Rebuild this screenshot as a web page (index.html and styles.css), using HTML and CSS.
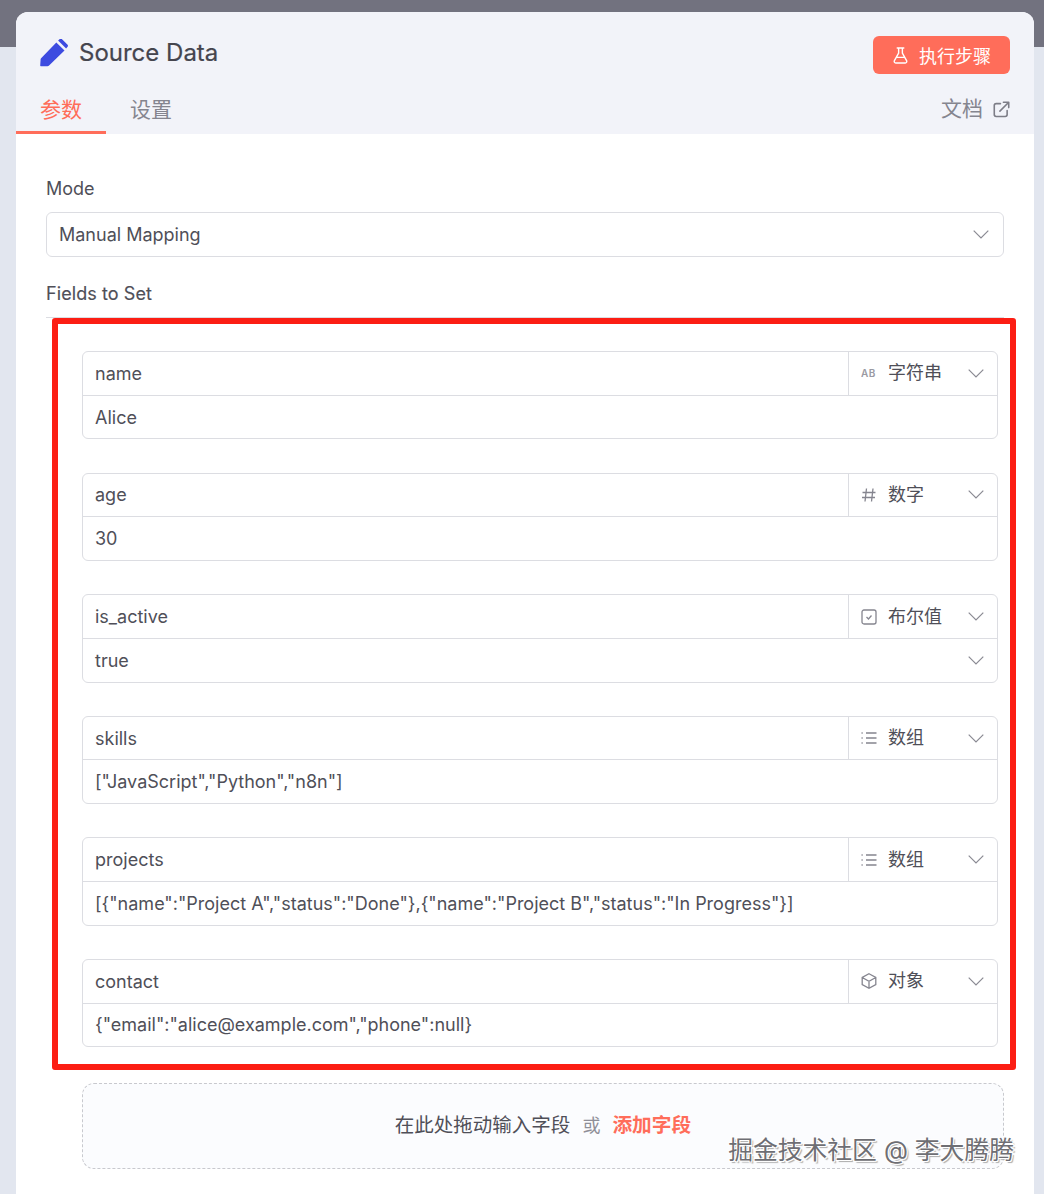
FILE: index.html
```html
<!DOCTYPE html>
<html lang="zh">
<head>
<meta charset="utf-8">
<title>Source Data</title>
<link rel="stylesheet" href="styles.css">
</head>
<body>
<div class="backdrop"></div>
<main class="card">
  <header class="head">
    <div class="title-row">
      <h1 class="title">
        <svg class="pencil" viewBox="0 0 28 28" width="28" height="28"><path fill="#3d4be0" d="M1 27.5c-.3 0-.6-.3-.6-.7l.4-6.2c0-.5.2-.9.5-1.2L16.500 3.600l8.200 8.200L9 27c-.4.3-.8.5-1.300.5zM18.300 1.800 20 .3c.6-.5 1.400-.5 2 0l5.800 5.700c.5.600.5 1.400 0 2l-1.500 1.600z" transform="translate(-.2 -.2)"/></svg>
        Source Data
      </h1>
      <button class="run">
        <svg viewBox="0 0 16 18" width="15" height="17" fill="none" stroke="#fff" stroke-width="1.500" stroke-linejoin="round" stroke-linecap="round"><path d="M4.500 1h7M6 1v5.500L1.500 14.500c-.6 1.100.1 2.500 1.400 2.500h10.200c1.300 0 2-1.400 1.400-2.500L10 6.500V1M4 11h8"/></svg>
        <span>执行步骤</span>
      </button>
    </div>
    <nav class="tabs">
      <a class="tab active">参数</a>
      <a class="tab">设置</a>
      <a class="docs">文档
        <svg viewBox="0 0 16 16" width="17" height="17" fill="none" stroke="#7d7d87" stroke-width="1.500" stroke-linecap="round" stroke-linejoin="round"><path d="M7 2.500H3A1.800 1.800 0 0 0 1.200 4.300v8.500A1.800 1.800 0 0 0 3 14.600h8.500a1.800 1.800 0 0 0 1.800-1.800V9M6.500 9.500 14.800 1.200M9.800 1.200h5v5"/></svg>
      </a>
    </nav>
  </header>
  <section class="body">
    <label class="label mode-label">Mode</label>
    <div class="select-box"><span>Manual Mapping</span><svg class="chev" viewBox="0 0 16 9"><path d="M.7.7 8 8l7.300-7.300"/></svg></div>
    <label class="label fields-label">Fields to Set</label>
    <div class="rule"></div>
    <div class="fields">
      <div class="field">
        <div class="row">
          <div class="name">name</div>
          <div class="type">
            <svg class="ti" viewBox="0 0 16 16"><text x="0" y="11.500" class="ab">AB</text></svg>
            <span>字符串</span><svg class="chev" viewBox="0 0 16 9"><path d="M.7.7 8 8l7.300-7.300"/></svg>
          </div>
        </div>
        <div class="row val">Alice</div>
      </div>
      <div class="field">
        <div class="row">
          <div class="name">age</div>
          <div class="type">
            <svg class="ti" viewBox="0 0 16 16"><path d="M5.500 1.500 4 14.500M12 1.500l-1.500 13M1.500 5.500h13M1 10.500h13"/></svg>
            <span>数字</span><svg class="chev" viewBox="0 0 16 9"><path d="M.7.7 8 8l7.300-7.300"/></svg>
          </div>
        </div>
        <div class="row val">30</div>
      </div>
      <div class="field">
        <div class="row">
          <div class="name">is_active</div>
          <div class="type">
            <svg class="ti" viewBox="0 0 16 16"><rect x="1" y="1" width="14" height="14" rx="2"/><path d="m5.500 8 2 2 3-3.500"/></svg>
            <span>布尔值</span><svg class="chev" viewBox="0 0 16 9"><path d="M.7.7 8 8l7.300-7.300"/></svg>
          </div>
        </div>
        <div class="row val split"><span>true</span><svg class="chev" viewBox="0 0 16 9"><path d="M.7.7 8 8l7.300-7.300"/></svg></div>
      </div>
      <div class="field">
        <div class="row">
          <div class="name">skills</div>
          <div class="type">
            <svg class="ti" viewBox="0 0 16 16"><path d="M5 3h10.500M5 8h10.500M5 13h10.500M.5 3h1.200M.5 8h1.200M.5 13h1.200"/></svg>
            <span>数组</span><svg class="chev" viewBox="0 0 16 9"><path d="M.7.7 8 8l7.300-7.300"/></svg>
          </div>
        </div>
        <div class="row val">["JavaScript","Python","n8n"]</div>
      </div>
      <div class="field">
        <div class="row">
          <div class="name">projects</div>
          <div class="type">
            <svg class="ti" viewBox="0 0 16 16"><path d="M5 3h10.500M5 8h10.500M5 13h10.500M.5 3h1.200M.5 8h1.200M.5 13h1.200"/></svg>
            <span>数组</span><svg class="chev" viewBox="0 0 16 9"><path d="M.7.7 8 8l7.300-7.300"/></svg>
          </div>
        </div>
        <div class="row val">[{"name":"Project A","status":"Done"},{"name":"Project B","status":"In Progress"}]</div>
      </div>
      <div class="field">
        <div class="row">
          <div class="name">contact</div>
          <div class="type">
            <svg class="ti" viewBox="0 0 16 16"><path d="M8 .8 14.800 4.500v7L8 15.200 1.200 11.500v-7zM1.200 4.500 8 8.200l6.800-3.700M8 8.200v7"/></svg>
            <span>对象</span><svg class="chev" viewBox="0 0 16 9"><path d="M.7.7 8 8l7.300-7.300"/></svg>
          </div>
        </div>
        <div class="row val">{"email":"alice@example.com","phone":null}</div>
      </div>
    </div>
    <div class="drop">
      <span class="drop-text">在此处拖动输入字段</span>
      <span class="drop-or">或</span>
      <span class="drop-add">添加字段</span>
    </div>
  </section>
</main>
<div class="highlight"></div>
<div class="watermark">掘金技术社区 @ 李大腾腾</div>
</body>
</html>
```
FILE: styles.css
```css
* { box-sizing: border-box; }
html, body { margin: 0; height: 1194px; overflow: hidden; }
body {
  position: relative;
  background: #e2e6ef;
  font-family: Inter, "Noto Sans CJK SC", sans-serif;
  color: #4f4f58;
}
.backdrop { position: absolute; left: 0; top: 0; width: 100%; height: 47px; background: #72727f; }
.card {
  position: absolute;
  left: 16px; top: 12px;
  width: 1018px; height: 1182px;
  background: #fff;
  border-radius: 12px 12px 0 0;
  overflow: hidden;
}
.head { height: 122px; background: #f2f3f9; display: flex; flex-direction: column; }
.title-row { display: flex; justify-content: space-between; align-items: flex-start; padding: 24px 24px 0 24px; height: 76px; }
.title { margin: 3px 0 0; display: flex; align-items: center; gap: 11px; font-size: 24px; font-weight: 400; line-height: 28px; color: #45454e; -webkit-text-stroke: 0.2px #45454e; }
.pencil { display: block; margin-top: -1px; }
.run {
  width: 137px; height: 38px; border: 0; border-radius: 6px;
  background: #ff6d5a; color: #fff;
  display: flex; align-items: center; justify-content: center; gap: 11px;
  font: 400 18px Inter, "Noto Sans CJK SC", sans-serif; padding: 0 0 0 1px;
}
.tabs { display: flex; align-items: flex-start; flex: 1; }
.tab { width: 90px; height: 46px; padding-top: 7px; line-height: 30px; font-size: 21px; color: #85858f; text-align: center; }
.tab + .tab { width: auto; padding-left: 24px; }
.tab.active { color: #ff6d5a; border-bottom: 3px solid #ff6d5a; }
.docs { margin-left: auto; margin-right: 24px; padding-top: 6px; line-height: 30px; font-size: 21px; color: #85858f; display: flex; align-items: center; gap: 10px; }
.body { position: relative; padding: 0 30px; }
.label { display: block; font-size: 18px; line-height: 24px; color: #4f4f58; }
.mode-label { margin-top: 43px; }
.select-box {
  margin-top: 11px; height: 45px; padding: 0 14px 0 12px;
  border: 1px solid #dcdde2; border-radius: 6px;
  display: flex; align-items: center; justify-content: space-between;
  font-size: 18px;
}
.chev { width: 16px; height: 9px; fill: none; stroke: #8a8a93; stroke-width: 1.200; flex: none; }
.fields-label { margin-top: 25px; -webkit-text-stroke: 0.15px #4f4f58; letter-spacing: 0.08px; }
.rule { margin-top: 11px; height: 1px; background: #dcdde2; }
.fields { margin: 33px 6px 0 36px; display: flex; flex-direction: column; gap: 33.200px; }
.field { height: 88.400px; border: 1px solid #dcdde2; border-radius: 6px; display: flex; flex-direction: column; font-size: 18px; }
.row { flex: 1; display: flex; min-height: 0; align-items: stretch; }
.row:first-child { border-bottom: 1px solid #dcdde2; }
.name { flex: 1; padding: 0 12px; display: flex; align-items: center; }
.type { width: 149px; border-left: 1px solid #dcdde2; padding: 0 13px 0 12px; display: flex; align-items: center; }
.type span { margin-left: 11px; flex: 1; line-height: 22px; }
.ti { width: 16px; height: 16px; fill: none; stroke: #85858f; stroke-width: 1.300; flex: none; }
.ab { font: 600 10px Inter, sans-serif; fill: #9a9aa3; stroke: none; letter-spacing: 0.5px; }
.val { padding: 0 12px; align-items: center; }
.val.split { justify-content: space-between; padding-right: 13px; }
.drop {
  margin: 36px 0 0 36px; height: 86px; padding-bottom: 5px;
  border: 1px dashed #c8c9ce; border-radius: 12px;
  background: #fbfcfe;
  display: flex; align-items: center; justify-content: center;
}
.drop-text { font-size: 19.500px; color: #4f4f58; }
.drop-or { font-size: 18px; color: #8f8f98; margin: 0 12px; }
.drop-add { font-size: 19.700px; font-weight: 700; color: #ff6d5a; }
.highlight { position: absolute; left: 52px; top: 318px; width: 964px; height: 752px; border: 6px solid #fc1e14; border-radius: 3px; }
.watermark {
  position: absolute; right: 30px; top: 1132px;
  font-size: 24.800px; line-height: 36px; color: #6e6e73; white-space: nowrap;
  text-shadow: 1px 1px 0 #fff, -1px -1px 0 #fff, 1px -1px 0 #fff, -1px 1px 0 #fff, 2px 2px 1px #aaa;
}
```
